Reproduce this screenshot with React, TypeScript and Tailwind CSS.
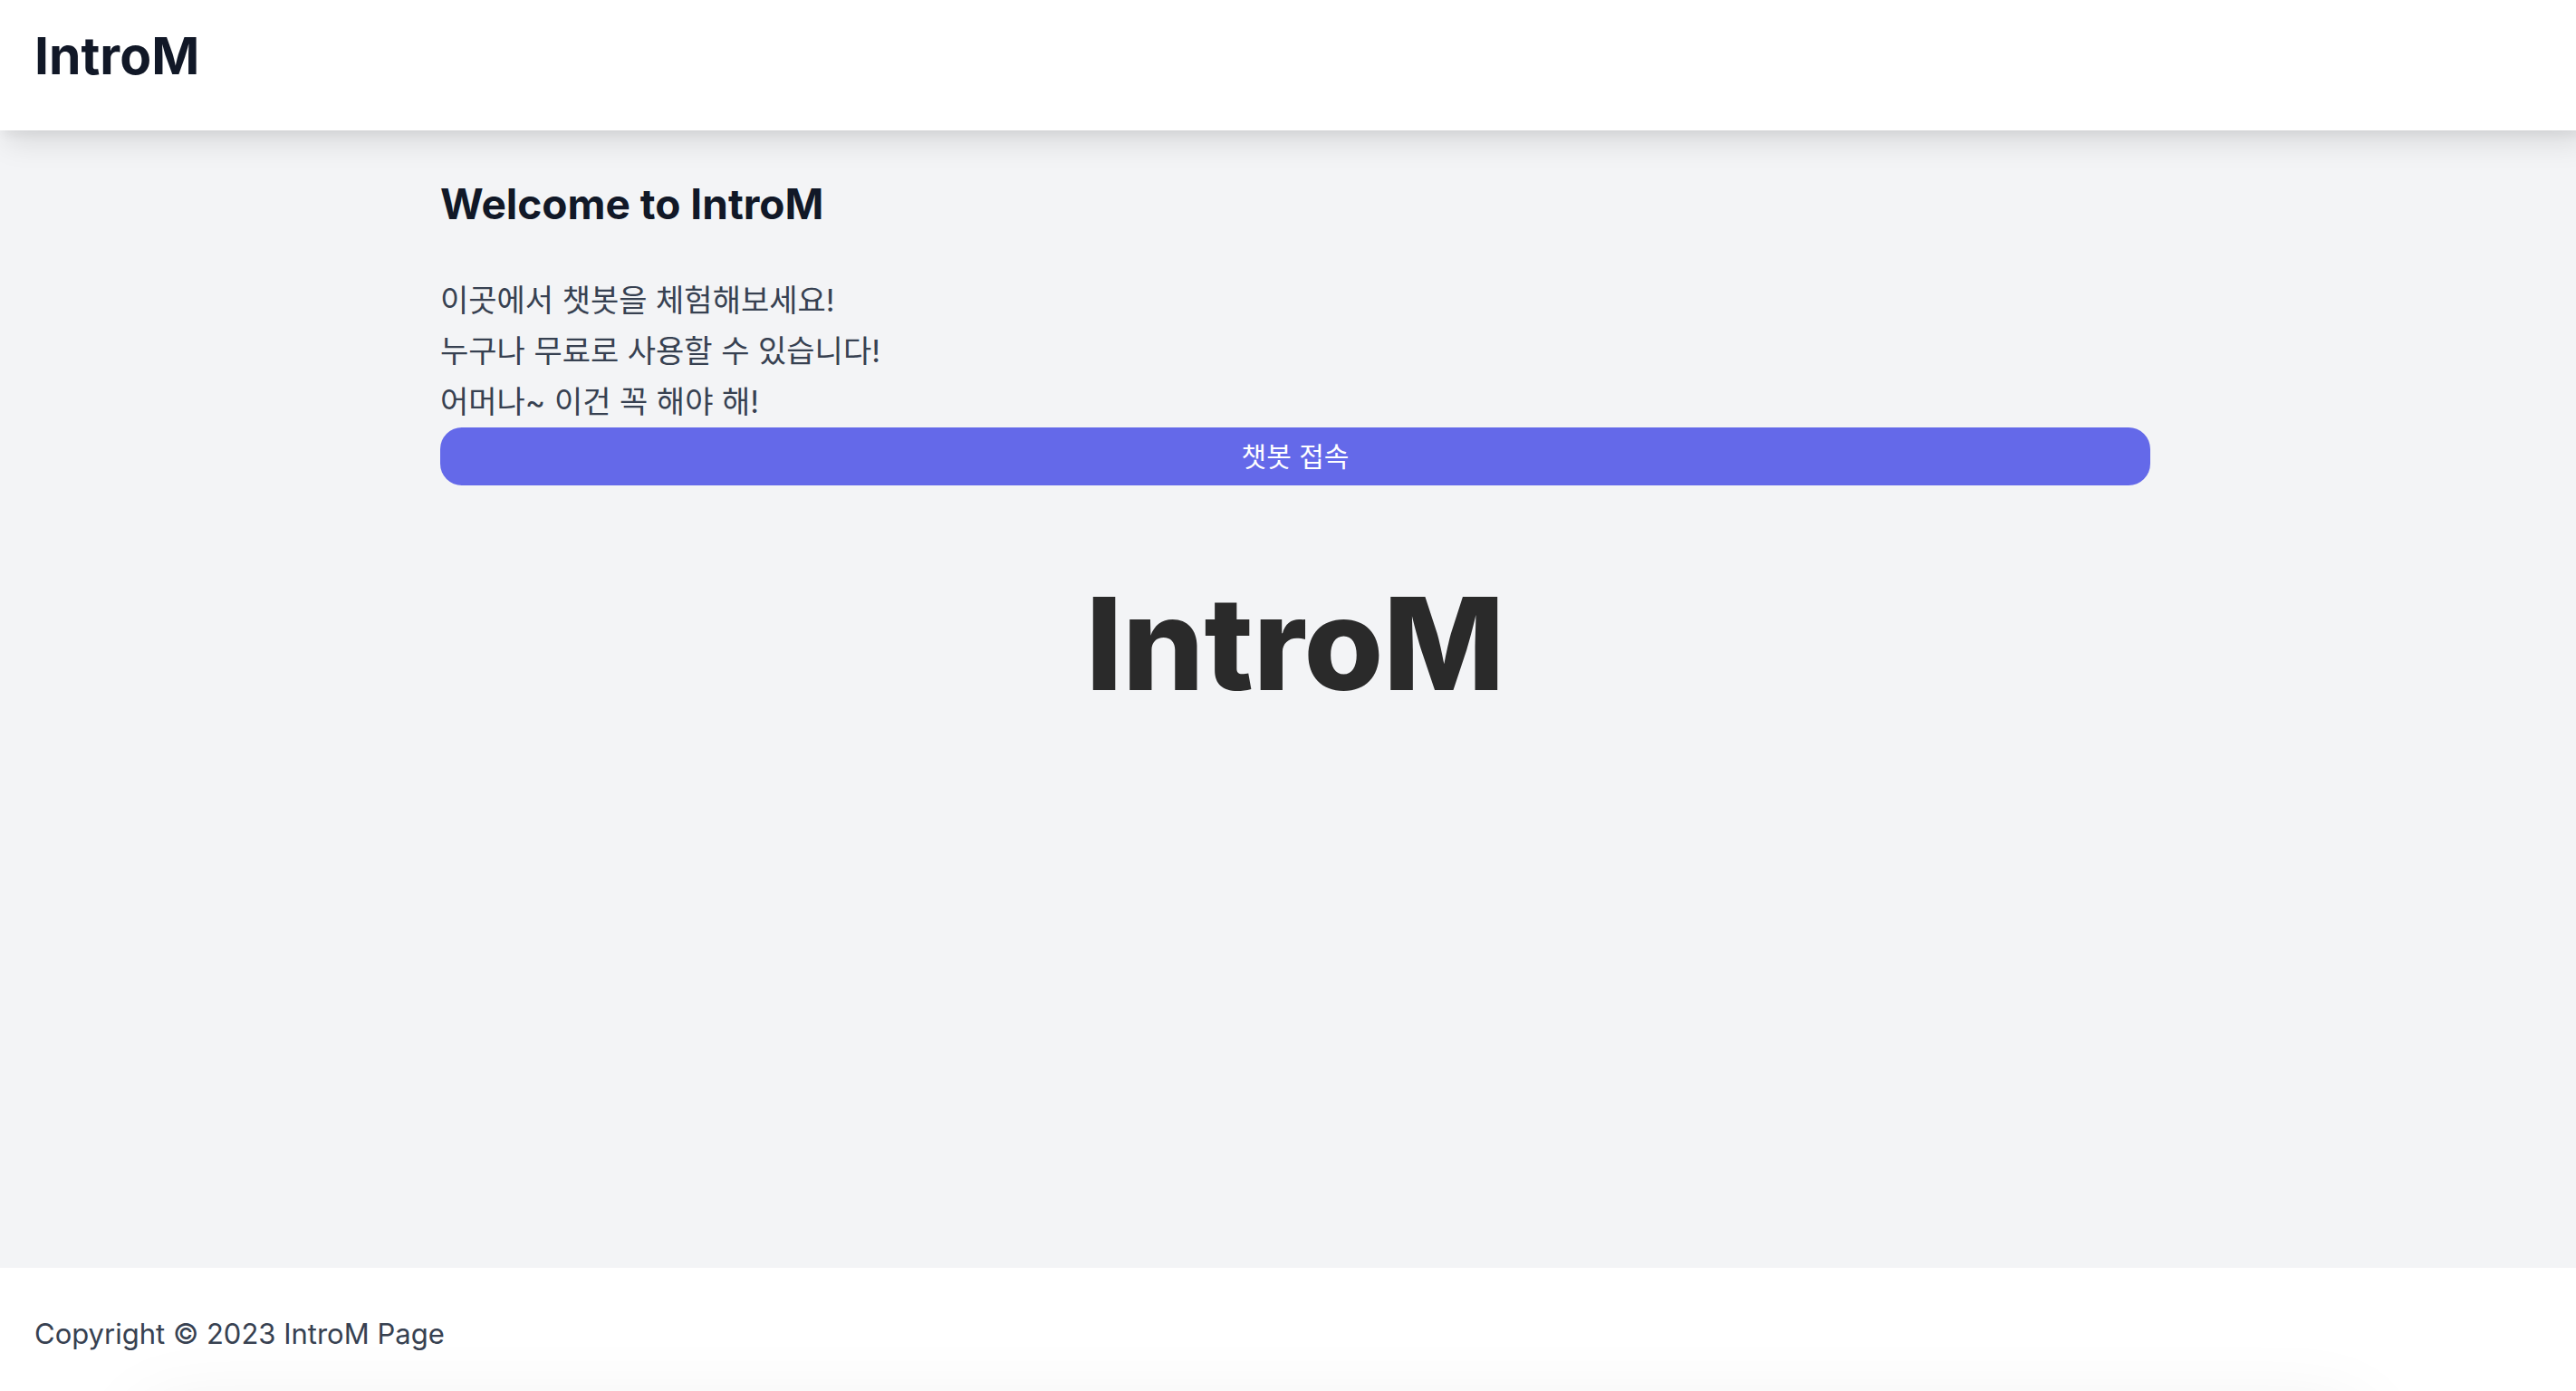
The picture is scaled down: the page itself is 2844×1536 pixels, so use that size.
export default function App() {
  return (
    <div className="flex min-h-screen flex-col overflow-x-clip bg-[#f3f4f6] font-['Inter','Noto_Sans_CJK_KR',sans-serif] text-[#111827]">
      <header className="z-10 -mr-4 h-36 bg-white px-[38px] pt-8 shadow-[0_20px_30px_-6px_rgba(0,0,0,0.1),0_8px_12px_-4px_rgba(0,0,0,0.06)]">
        <h1 className="text-[57px] leading-[60px] font-bold">IntroM</h1>
      </header>
      <div className="grow pl-4">
        <main className="mx-auto w-full max-w-[1888px] pt-12">
          <h2 className="text-[46px] leading-[66px] font-bold">Welcome to IntroM</h2>
          <div className="mt-[46px] text-[34px] leading-14 text-[#374151]">
            <p>이곳에서 챗봇을 체험해보세요!</p>
            <p>누구나 무료로 사용할 수 있습니다!</p>
            <p>어머나~ 이건 꼭 해야 해!</p>
          </div>
          <button type="button" className="block h-16 w-full rounded-3xl bg-[#6469e9] text-[30px] text-white">
            챗봇 접속
          </button>
          <div className="flex justify-center pt-[88px] text-[142px] leading-[172px] font-extrabold text-[#2a2a2a]">
            IntroM
          </div>
        </main>
      </div>
      <footer className="relative h-34 overflow-hidden bg-white px-[38px] pt-12 text-[31px] leading-[50px] text-[#374151]">
        <p>Copyright © 2023 IntroM Page</p>
        <div className="absolute top-full right-[240px] left-[160px] h-40 shadow-[0_24px_90px_rgba(0,0,0,0.08)]" />
      </footer>
    </div>
  );
}
